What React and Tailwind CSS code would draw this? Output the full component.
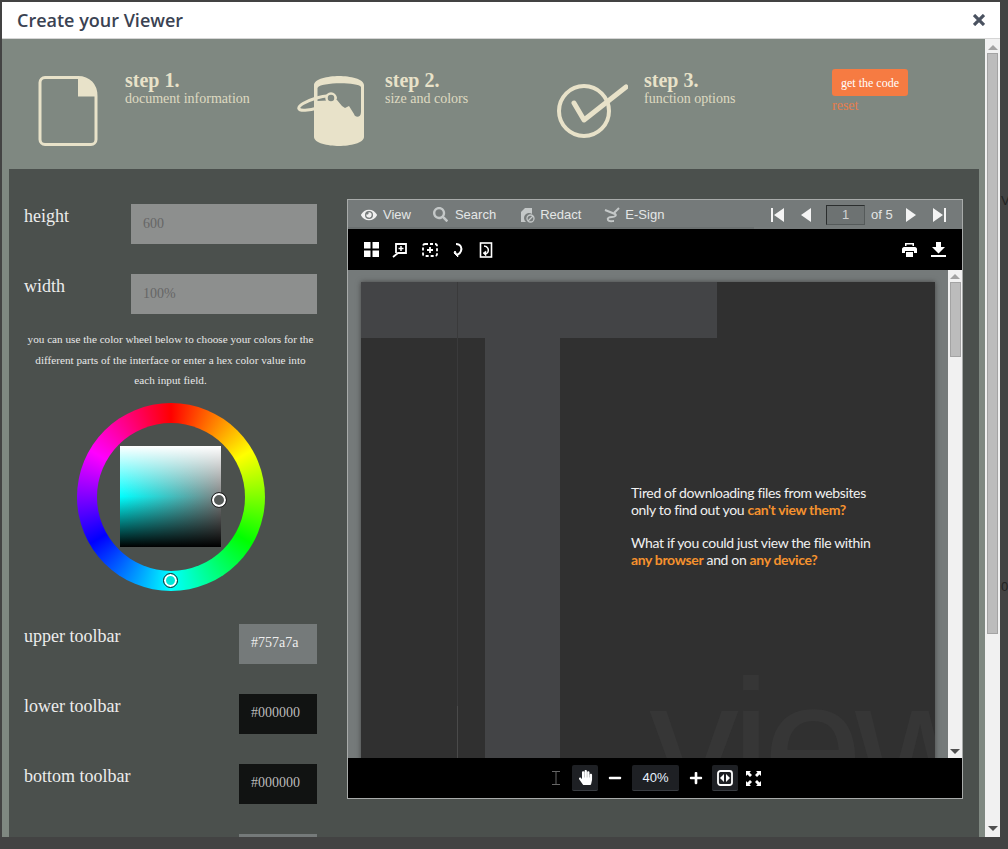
import React from 'react';
import { FaEye, FaSearch, FaPlus, FaMinus, FaHandPaper } from 'react-icons/fa';

const serif = "font-['Liberation_Serif',serif]";
const sans = "font-['Liberation_Sans',sans-serif]";

const FileIcon = () => (
  <svg width="60" height="72" viewBox="38 75 60 72" fill="none">
    <path d="M78 77.500H45a5 5 0 0 0-5 5v57a5 5 0 0 0 5 5h46a5 5 0 0 0 5-5V96C96 85 89 77.500 78 77.500Z" stroke="#e8e2c9" strokeWidth="3" />
    <path d="M78 77c10 0 19 8 19 19.500H78Z" fill="#e8e2c9" />
  </svg>
);

const BucketIcon = () => (
  <svg width="68" height="72" viewBox="297 75 68 72" fill="none">
    <path
      fillRule="evenodd"
      fill="#e8e2c9"
      d="M314 85C314 79 328 76 339 76C350 76 364 79 364 85V137C364 143 350 146 339 146C328 146 314 143 314 137ZM317.500 88C320 82 358 82 361 87V112C361 118 355 118 354 114L349 106L345 108L342 106L337 100L317.500 101Z"
    />
    <ellipse cx="317" cy="103" rx="19" ry="5" transform="rotate(-17 317 103)" stroke="#e8e2c9" strokeWidth="3" />
    <circle cx="331" cy="98" r="4.500" fill="#7f8881" stroke="#e8e2c9" strokeWidth="2.500" />
  </svg>
);

const CheckIcon = () => (
  <svg width="72" height="58" viewBox="556 83 72 58" fill="none" stroke="#e8e2c9" strokeLinecap="round" strokeLinejoin="round">
    <circle cx="584" cy="111" r="25" strokeWidth="4" />
    <path d="M574 103L584 120L626 87" strokeWidth="5" />
  </svg>
);

const Step = ({ icon, iconClass, title, text, className }) => (
  <div className={`flex ${className}`}>
    <div className={iconClass}>{icon}</div>
    <div className={`${serif} text-[#e8e2c9]`}>
      <div className="text-[20px] font-bold leading-[22px] mt-[30px]">{title}</div>
      <div className="text-[14px] leading-[14px] mt-[1px] opacity-90">{text}</div>
    </div>
  </div>
);

const Field = ({ label, value, inputClass, className }) => (
  <div className={`flex justify-between ${className}`}>
    <span className={`${serif} text-[18px] leading-[25px] text-[#ececec]`}>{label}</span>
    <div className={`${serif} h-[40px] flex items-center px-3 pb-[2px] text-[14px] ${inputClass}`}>{value}</div>
  </div>
);

const ColorWheel = () => (
  <div className="relative w-[188px] h-[188px] mx-auto mt-[12px]">
    <div className="w-full h-full rounded-full bg-[conic-gradient(#f00,#ff0,#0f0,#0ff,#00f,#f0f,#f00)] p-[20px]">
      <div className="w-full h-full rounded-full bg-[#4b504d] flex items-center justify-center">
        <div className="w-[101px] h-[101px] bg-[linear-gradient(to_bottom,#fff,transparent_50%,#000),linear-gradient(to_right,#0ff,#808080)]" />
      </div>
    </div>
    <div className="absolute left-[135px] top-[90px] w-[14px] h-[14px] rounded-full border-2 border-white bg-[#555a58] outline outline-1 outline-[#222]" />
    <div className="absolute left-[87px] top-[171px] w-[13px] h-[13px] rounded-full border-2 border-white bg-[#00e8d8] outline outline-1 outline-[#222]" />
  </div>
);

const Arrow = ({ up, className }) => (
  <div className={`w-0 h-0 border-x-[5px] border-x-transparent ${up ? 'border-b-[5px] border-b-[#a3a3a3]' : 'border-t-[5px] border-t-[#505050]'} ${className}`} />
);

const Tab = ({ icon, label, className }) => (
  <div className={`flex items-center text-[13px] text-[#e4e6e6] ${className}`}>
    {icon}
    <span>{label}</span>
  </div>
);

const RedactIcon = () => (
  <svg width="15" height="16" viewBox="0 0 15 16" fill="#c4c8c8">
    <path d="M1 5L5 1H12V7A5 5 0 0 0 6 15H1Z" />
    <circle cx="10.500" cy="11.500" r="3.500" fill="none" stroke="#c4c8c8" strokeWidth="1.300" />
    <path d="M8 14L13 9" stroke="#c4c8c8" strokeWidth="1.200" />
  </svg>
);

const SignIcon = () => (
  <svg width="16" height="16" viewBox="0 0 16 16" fill="none" stroke="#c4c8c8" strokeWidth="2">
    <path d="M1 3L11 7C13 8 11 10 8 10C5 10 3 11 4 13C5 15 8 14 10 14" />
    <path d="M10 6L15 1" />
  </svg>
);

const Viewer = () => (
  <div className={`${sans} w-[616px] h-[600px] shrink-0 border border-[#a8abaa] flex flex-col`}>
    {/* upper toolbar */}
    <div className="h-[29px] bg-[#757a7a] flex">
      <div className="w-[406px] flex items-center pl-[13px] pt-[2px] border-b-2 border-[#6b7070]">
        <Tab className="gap-[6px]" icon={<FaEye className="text-[16px] text-[#f0f0f0]" />} label="View" />
        <Tab className="gap-[7px] ml-[22px]" icon={<FaSearch className="text-[15px] text-[#c4c8c8]" />} label="Search" />
        <Tab className="gap-[5px] ml-[24px]" icon={<RedactIcon />} label="Redact" />
        <Tab className="gap-[5px] ml-[23px]" icon={<SignIcon />} label="E-Sign" />
      </div>
      <div className="flex-1 flex items-center text-[#f2f2f2]">
        <svg className="ml-[17px]" width="13" height="16" viewBox="0 0 13 16" fill="#f4f4f4"><path d="M0 1H2V15H0ZM13 1V15L3 8Z" /></svg>
        <svg className="ml-[17px]" width="10" height="16" viewBox="0 0 10 16" fill="#f4f4f4"><path d="M10 1V15L0 8Z" /></svg>
        <div className="ml-[15px] w-[39px] h-[20px] bg-[#6d7272] border border-[#555a5a] border-t-[#2b2e2e] border-l-[#2b2e2e] flex items-center justify-center text-[13px] text-[#d0d2d2]">1</div>
        <span className="ml-[6px] text-[13px] text-[#e4e6e6]">of 5</span>
        <svg className="ml-[13px]" width="10" height="16" viewBox="0 0 10 16" fill="#f4f4f4"><path d="M0 1V15L10 8Z" /></svg>
        <svg className="ml-[17px]" width="13" height="16" viewBox="0 0 13 16" fill="#f4f4f4"><path d="M11 1H13V15H11ZM0 1V15L10 8Z" /></svg>
      </div>
    </div>
    {/* lower toolbar */}
    <div className="h-[41px] bg-black flex items-center text-white">
      <svg className="ml-[16px]" width="15" height="15" viewBox="0 0 15 15" fill="#fff">
        <path d="M0 0H6.500V6.500H0ZM8.500 0H15V6.500H8.500ZM0 8.500H6.500V15H0ZM8.500 8.500H15V15H8.500Z" />
      </svg>
      <svg className="ml-[13px]" width="16" height="16" viewBox="0 0 16 16" fill="none" stroke="#fff" strokeWidth="1.800">
        <path d="M4 11V2H14V11H6L1 15" />
        <path d="M9 4V9M6.500 6.500H11.500" strokeWidth="1.500" />
      </svg>
      <svg className="ml-[14px]" width="16" height="16" viewBox="0 0 16 16" fill="none" stroke="#fff" strokeWidth="1.800">
        <rect x="1" y="2" width="14" height="12" rx="2" strokeDasharray="3 2" />
        <path d="M8 5V11M5 8H11" />
      </svg>
      <svg className="ml-[15px]" width="12" height="16" viewBox="0 0 12 16" fill="none" stroke="#fff" strokeWidth="2">
        <path d="M3 2C8 2 9 6 8 9C7.500 11 6 12 4 13" />
        <path d="M1 11L5 15L2 9Z" fill="#fff" strokeWidth="1" />
      </svg>
      <svg className="ml-[14px]" width="14" height="16" viewBox="0 0 14 16" fill="none" stroke="#fff">
        <rect x="1.500" y="1" width="11" height="14" strokeWidth="1.600" />
        <path d="M5 4C9 4 10 8 9 10C8.500 11 7 12 6 12" strokeWidth="1.600" />
        <path d="M4 11L7 14L7 9Z" fill="#fff" strokeWidth="0.500" />
      </svg>
      <svg className="ml-auto" width="15" height="14" viewBox="0 0 15 14" fill="#fff">
        <path d="M3 0H12V3H10.500V1.500H4.500V3H3Z" />
        <path fillRule="evenodd" d="M2 4H13C14 4 15 5 15 6V10H12V8H3V10H0V6C0 5 1 4 2 4Z" />
        <path d="M4 9H11V14H4Z" />
      </svg>
      <svg className="ml-[14px] mr-[16px]" width="15" height="15" viewBox="0 0 15 15" fill="#fff">
        <path d="M5 0H10V5H14L7.500 11.500L1 5H5Z" />
        <path d="M0 13H15V15H0Z" />
      </svg>
    </div>
    {/* document area */}
    <div className="h-[488px] bg-[#757a7a] flex">
      <div className="w-[600px] pl-[13px] pr-[13px] pt-[12px] overflow-hidden">
        <div className="relative h-[500px] bg-[#303030] shadow-[0_0_5px_#444] overflow-hidden">
          <div className="absolute left-0 top-0 w-[356px] h-[56px] bg-[#434446]" />
          <div className="absolute left-[124px] top-[56px] w-[75px] h-[444px] bg-[#434446]" />
          <div className="absolute left-[96px] top-0 w-px h-[424px] bg-[#3a3a3b]" />
          <div className="absolute left-[96px] top-[424px] w-px h-[52px] bg-[#4a4a4a]" />
          <div className={`absolute left-[288px] top-[372px] ${sans} text-[180px] leading-[180px] tracking-[-8px] text-[#363636] select-none`}>view</div>
          <div className="absolute left-[270px] top-[202px] font-['Lato',sans-serif] text-[14px] leading-[17px] tracking-[-0.35px] text-[#f0f0f0]">
            <p>Tired of downloading files from websites</p>
            <p>only to find out you <b className="font-bold text-[#f5922e]">can't view them?</b></p>
            <p className="mt-[16px]">What if you could just view the file within</p>
            <p><b className="font-bold text-[#f5922e]">any browser</b> and on <b className="font-bold text-[#f5922e]">any device?</b></p>
          </div>
        </div>
      </div>
      <div className="w-[14px] bg-[#f1f1f1] flex flex-col items-center">
        <Arrow up className="mt-[4px]" />
        <div className="mt-[3px] w-[11px] h-[75px] bg-[#bcbcbc] border border-[#a3a3a3]" />
        <Arrow className="mt-auto mb-[4px]" />
      </div>
    </div>
    {/* bottom toolbar */}
    <div className="h-[40px] bg-black flex items-center text-white">
      <svg className="ml-[204px]" width="8" height="14" viewBox="0 0 8 14" fill="none" stroke="#666" strokeWidth="1">
        <path d="M0 .5H8M4 .5V13.500M0 13.500H8" />
      </svg>
      <div className="ml-[12px] w-[26px] h-[26px] bg-[#1e2024] border-b border-[#3a3d42] rounded-[2px] flex items-center justify-center"><FaHandPaper className="text-[15px]" /></div>
      <FaMinus className="ml-[10px] text-[14px]" />
      <div className="ml-[10px] w-[47px] h-[26px] bg-[#1e2024] border-b border-[#3a3d42] rounded-[2px] flex items-center justify-center text-[13px] text-[#e8f2ff]">40%</div>
      <FaPlus className="ml-[10px] text-[14px]" />
      <div className="ml-[9px] w-[26px] h-[26px] bg-[#1e2024] border-b border-[#3a3d42] rounded-[2px] flex items-center justify-center">
        <svg width="16" height="16" viewBox="0 0 16 16" fill="none">
          <rect x="1" y="1" width="14" height="14" rx="2.500" stroke="#fff" strokeWidth="1.800" />
          <path d="M7 4V12L3 8ZM9 4V12L13 8Z" fill="#fff" />
        </svg>
      </div>
      <svg className="ml-[8px]" width="15" height="15" viewBox="0 0 15 15" fill="#fff">
        <path d="M0 0H5L3.500 1.500L6 4L4 6L1.500 3.500L0 5ZM15 0V5L13.500 3.500L11 6L9 4L11.500 1.500L10 0ZM0 15V10L1.500 11.500L4 9L6 11L3.500 13.500L5 15ZM15 15H10L11.500 13.500L9 11L11 9L13.500 11.500L15 10Z" />
      </svg>
    </div>
  </div>
);

export default function App() {
  return (
    <div className="relative w-[1008px] h-[849px] bg-[#434343] overflow-hidden">
      {/* bits of the page behind the dialog */}
      <span className={`${sans} absolute left-[1001px] top-[191px] text-[13px] text-[#222]`}>V</span>
      <span className={`${sans} absolute left-[1001px] top-[577px] text-[13px] text-[#222]`}>0</span>

      <div className="absolute left-[2px] top-[2px] w-[998px] h-[835px] bg-white flex flex-col overflow-hidden">
        <div className="h-[37px] shrink-0 border-b border-[#d5d5d5] flex items-center justify-between pl-[15px] pr-[15px]">
          <h1 className="font-['Open_Sans',sans-serif] font-semibold text-[18px] text-[#3a4252]">Create your Viewer</h1>
          <svg width="12" height="12" viewBox="0 0 12 12" stroke="#4a5260" strokeWidth="3.200">
            <path d="M1 1L11 11M11 1L1 11" />
          </svg>
        </div>
        <div className="flex-1 flex min-h-0">
          <div className="flex-1 bg-[#7f8881] flex flex-col pl-[7px] pr-[6px] min-w-0">
            {/* steps */}
            <div className="h-[130px] shrink-0 flex">
              <Step className="w-[260px]" iconClass="w-[116px] pl-[29px] pt-[36px]" icon={<FileIcon />} title="step 1." text="document information" />
              <Step className="w-[260px]" iconClass="w-[116px] pt-[36px] pl-[28px]" icon={<BucketIcon />} title="step 2." text="size and colors" />
              <Step className="w-[303px]" iconClass="w-[115px] pt-[44px] pl-[27px]" icon={<CheckIcon />} title="step 3." text="function options" />
              <div className={`${serif} pt-[30px] flex flex-col items-start`}>
                <button className="w-[76px] h-[27px] rounded-[3px] bg-[#f67b42] text-white text-[12px]">get the code</button>
                <span className="text-[14px] leading-[16px] mt-[2px] text-[#e87d4b]">reset</span>
              </div>
            </div>
            {/* panel */}
            <div className="flex-1 min-h-0 bg-[#4b504d] flex overflow-hidden pl-[15px]">
              <div className="w-[293px] shrink-0 pt-[35px] flex flex-col gap-[30px]">
                <Field label="height" value="600" inputClass="w-[186px] bg-[#8d8f8e] text-[#666]" />
                <Field label="width" value="100%" inputClass="w-[186px] bg-[#8d8f8e] text-[#666]" />
                <div className="-mt-[15px]">
                  <p className={`${serif} text-[11.200px] leading-[20.500px] text-center text-[#e8e8e8] px-[2px]`}>
                    you can use the color wheel below to choose your colors for the different parts of the interface or enter a hex color value into each input field.
                  </p>
                  <ColorWheel />
                </div>
                <Field className="mt-[3px]" label="upper toolbar" value="#757a7a" inputClass="w-[78px] bg-[#757a7a] text-[#eee]" />
                <Field label="lower toolbar" value="#000000" inputClass="w-[78px] bg-[#111312] text-[#bbb]" />
                <Field label="bottom toolbar" value="#000000" inputClass="w-[78px] bg-[#111312] text-[#bbb]" />
                <div className="ml-auto w-[78px] h-[40px] shrink-0 bg-[#757a7a]" />
              </div>
              <div className="ml-[30px] pt-[30px]">
                <Viewer />
              </div>
            </div>
          </div>
          {/* dialog scrollbar */}
          <div className="w-[15px] shrink-0 bg-[#f1f1f1] flex flex-col items-center">
            <Arrow up className="mt-[6px]" />
            <div className="mt-[3px] w-[11px] h-[581px] bg-[#bcbcbc] border border-[#a3a3a3]" />
            <Arrow className="mt-auto mb-[6px]" />
          </div>
        </div>
      </div>
    </div>
  );
}
